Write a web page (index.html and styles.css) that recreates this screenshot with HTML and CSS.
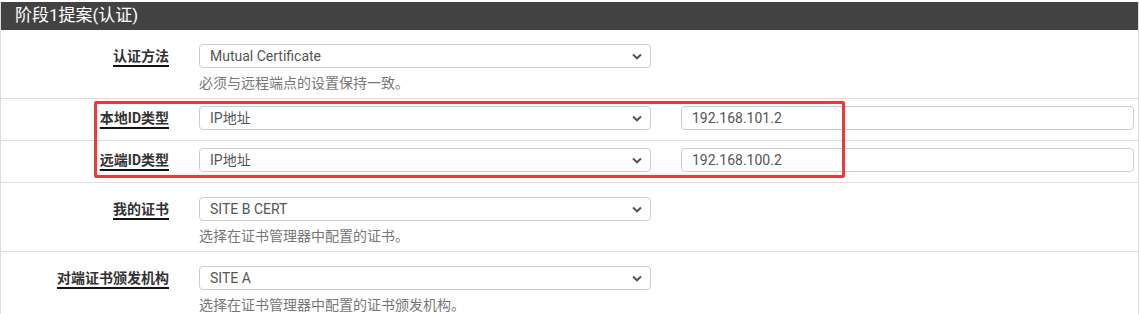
FILE: index.html
```html
<!DOCTYPE html>
<html lang="zh">
<head>
<meta charset="utf-8">
<link rel="stylesheet" href="styles.css">
</head>
<body>
<div class="panel">
  <div class="panel-heading">阶段1提案(认证)</div>
  <div class="panel-body">
    <div class="row">
      <div class="label-col"><span class="label">认证方法</span></div>
      <div class="field-col">
        <div class="select"><span>Mutual Certificate</span><svg class="chev" width="10" height="7" viewBox="0 0 10 7"><path d="M1 1.5 L5 5.3 L9 1.5" fill="none" stroke="#555" stroke-width="2"/></svg></div>
        <div class="help">必须与远程端点的设置保持一致。</div>
      </div>
    </div>
    <div class="row compact">
      <div class="label-col"><span class="label">本地ID类型</span></div>
      <div class="field-col">
        <div class="select"><span>IP地址</span><svg class="chev" width="10" height="7" viewBox="0 0 10 7"><path d="M1 1.5 L5 5.3 L9 1.5" fill="none" stroke="#555" stroke-width="2"/></svg></div>
      </div>
      <div class="field-col wide">
        <div class="input">192.168.101.2</div>
      </div>
    </div>
    <div class="row compact">
      <div class="label-col"><span class="label">远端ID类型</span></div>
      <div class="field-col">
        <div class="select"><span>IP地址</span><svg class="chev" width="10" height="7" viewBox="0 0 10 7"><path d="M1 1.5 L5 5.3 L9 1.5" fill="none" stroke="#555" stroke-width="2"/></svg></div>
      </div>
      <div class="field-col wide">
        <div class="input">192.168.100.2</div>
      </div>
    </div>
    <div class="row">
      <div class="label-col"><span class="label">我的证书</span></div>
      <div class="field-col">
        <div class="select"><span>SITE B CERT</span><svg class="chev" width="10" height="7" viewBox="0 0 10 7"><path d="M1 1.5 L5 5.3 L9 1.5" fill="none" stroke="#555" stroke-width="2"/></svg></div>
        <div class="help">选择在证书管理器中配置的证书。</div>
      </div>
    </div>
    <div class="row last">
      <div class="label-col"><span class="label">对端证书颁发机构</span></div>
      <div class="field-col">
        <div class="select"><span>SITE A</span><svg class="chev" width="10" height="7" viewBox="0 0 10 7"><path d="M1 1.5 L5 5.3 L9 1.5" fill="none" stroke="#555" stroke-width="2"/></svg></div>
        <div class="help">选择在证书管理器中配置的证书颁发机构。</div>
      </div>
    </div>
  </div>
  <div class="highlight"></div>
</div>
</body>
</html>
```
FILE: styles.css
```css
* { box-sizing: border-box; }
html, body { margin: 0; padding: 0; background: #fff; }
body {
  font-family: Roboto, "Noto Sans CJK SC", sans-serif;
  font-size: 14px;
  color: #333;
  padding-top: 2px;
  overflow: hidden;
}
.panel {
  position: relative;
  width: 1139px;
  border-left: 1px solid #ddd;
  border-right: 1px solid #ddd;
}
.panel-heading {
  background: #424242;
  color: #fff;
  height: 28px;
  line-height: 27px;
  font-size: 17px;
  padding-left: 14px;
}
.row {
  display: flex;
  align-items: flex-start;
  padding: 14px 0 5px;
  border-bottom: 1px solid #ddd;
}
.row.compact { padding: 7px 0 10px; }
.row.last { border-bottom: none; }
.label-col {
  width: 182px;
  flex: none;
  text-align: right;
  padding-right: 14px;
  line-height: 24px;
}
.label {
  font-weight: bold;
  font-size: 14px;
  color: #333;
  text-decoration: underline;
  text-decoration-thickness: 1.5px;
  text-underline-offset: 4px;
  text-decoration-color: #111;
}
.field-col {
  width: 483px;
  flex: none;
  padding-left: 16px;
  padding-right: 15px;
}
.field-col.wide {
  width: 472px;
  padding-left: 15px;
  padding-right: 4px;
}
.select, .input {
  height: 24px;
  border: 1px solid #ccc;
  border-radius: 4px;
  background: #fff;
  color: #555;
  font-size: 14px;
  line-height: 22px;
  padding-left: 10px;
  display: flex;
  align-items: center;
  justify-content: space-between;
}
.select .chev { margin-right: 8px; }
.help {
  margin-top: 5px;
  color: #777;
  font-size: 14px;
  line-height: 20px;
}
.highlight {
  position: absolute;
  left: 93px;
  top: 99px;
  width: 751px;
  height: 77px;
  border: 3px solid #e53c3f;
  border-radius: 2px;
  pointer-events: none;
}
```
